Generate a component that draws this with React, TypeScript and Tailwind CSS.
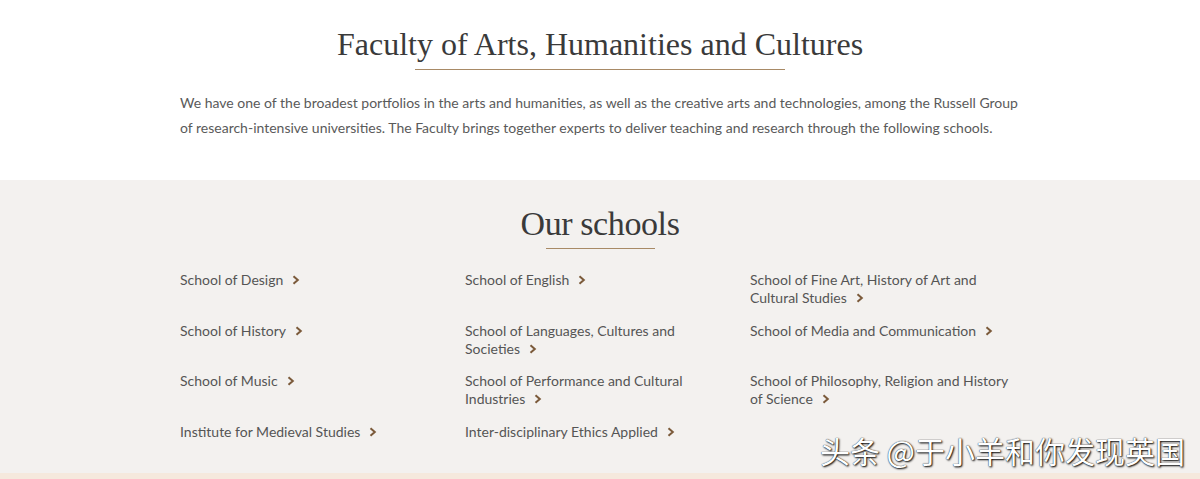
import { type JSX } from "react";

const SCHOOLS: string[] = [
  "School of Design",
  "School of English",
  "School of Fine Art, History of Art and Cultural Studies",
  "School of History",
  "School of Languages, Cultures and Societies",
  "School of Media and Communication",
  "School of Music",
  "School of Performance and Cultural Industries",
  "School of Philosophy, Religion and History of Science",
  "Institute for Medieval Studies",
  "Inter-disciplinary Ethics Applied",
];

const Chevron = (): JSX.Element => (
  <svg
    viewBox="0 0 8 10"
    aria-hidden="true"
    className="ml-[9px] inline-block h-[10px] w-[8px] align-[-0px]"
  >
    <path d="M1.5 1.2 L5.8 5 L1.5 8.8" fill="none" stroke="#7b5a3a" strokeWidth="2" />
  </svg>
);

const SchoolLink = ({ name }: { name: string }): JSX.Element => (
  <a href="#" className="block w-[265px] text-[14px] leading-[18px] text-[#555]">
    {name}
    <Chevron />
  </a>
);

export default function App(): JSX.Element {
  return (
    <div className="relative min-h-[479px] bg-white font-['Lato','Open_Sans',sans-serif]">
      <section className="flex flex-col items-center pt-[25px] pb-[40px]">
        <h2 className="font-['Liberation_Serif',serif] text-[32px] leading-[38px] text-[#3a3a3a]">
          Faculty of Arts, Humanities and Cultures
        </h2>
        <div className="mt-[6px] h-px w-[370px] bg-[#a88a66]" />
        <p className="mt-[20px] w-[840px] text-[14px] leading-[25px] text-[#5a5a5a]">
          We have one of the broadest portfolios in the arts and humanities, as well as the
          creative arts and technologies, among the Russell Group of research-intensive
          universities. The Faculty brings together experts to deliver teaching and research
          through the following schools.
        </p>
      </section>

      <section className="flex h-[293px] flex-col items-center bg-[#f3f1ef] pt-[24px]">
        <h2 className="font-['Liberation_Serif',serif] text-[34px] leading-[40px] text-[#3a3a3a] tracking-[-0.4px]">
          Our schools
        </h2>
        <div className="mt-[4px] h-px w-[109px] bg-[#a88a66]" />
        <div className="mt-[22px] grid w-[840px] grid-cols-[285px_285px_270px] gap-y-[14.5px]">
          {SCHOOLS.map((name) => (
            <SchoolLink key={name} name={name} />
          ))}
        </div>
      </section>

      <div className="h-[7px] bg-[#f5e9dd]" />

      <div className="absolute right-[15px] bottom-[12px] font-['Noto_Sans_CJK_SC',sans-serif] text-[30px] leading-[35px] text-white [text-shadow:1px_1px_2px_#000,0_0_1px_#000]">
        头条 @于小羊和你发现英国
      </div>
    </div>
  );
}
